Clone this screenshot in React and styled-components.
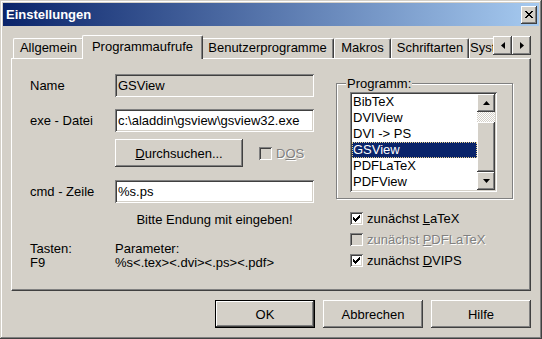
import React from 'react'
import styled, { createGlobalStyle } from 'styled-components'

const FACE = '#d4d0c8'

const raised = `
  box-shadow: inset -1px -1px #404040, inset 1px 1px #fff, inset -2px -2px #808080, inset 2px 2px ${FACE};
`
const sunken = `
  box-shadow: inset 1px 1px #808080, inset -1px -1px #fff, inset 2px 2px #404040, inset -2px -2px ${FACE};
`

const Global = createGlobalStyle`
  html, body { margin: 0; padding: 0; background: ${FACE}; }
  body {
    font-family: "Liberation Sans", Arial, sans-serif;
    font-size: 13px;
    color: #000;
  }
  * { box-sizing: border-box; }
`

const Window = styled.div`
  width: 542px;
  height: 339px;
  padding: 3px;
  background: ${FACE};
  box-shadow: inset -1px -1px #404040, inset 1px 1px ${FACE}, inset -2px -2px #808080, inset 2px 2px #fff;
  display: flex;
  flex-direction: column;
`

const TitleBar = styled.div`
  height: 23px;
  display: flex;
  align-items: center;
  padding: 0 2px 0 3px;
  background: linear-gradient(to right, #0a246a, #a6caf0);
`

const Title = styled.div`
  color: #fff;
  font-weight: bold;
  font-size: 13px;
`

const CaptionButton = styled.div`
  margin-left: auto;
  width: 16px;
  height: 18px;
  background: ${FACE};
  ${raised}
  display: flex;
  align-items: center;
  justify-content: center;
`

const Body = styled.div`
  flex: 1;
  padding: 9px 8px 0 8px;
  display: flex;
  flex-direction: column;
`

const TabRow = styled.div`
  height: 23px;
  display: flex;
  position: relative;
  z-index: 1;
`

const TabStrip = styled.div`
  flex: 1;
  height: 24px;
  overflow: hidden;
  display: flex;
  align-items: flex-end;
  padding-left: 2px;
`

const Tab = styled.div`
  flex-shrink: 0;
  position: relative;
  z-index: ${p => (p.$active ? 2 : 1)};
  width: ${p => p.$w + (p.$active ? 4 : 0)}px;
  height: ${p => (p.$active ? 24 : 20)}px;
  margin: 0 ${p => (p.$active ? -2 : 0)}px ${p => (p.$active ? 0 : 1)}px;
  line-height: ${p => (p.$active ? 21 : 18)}px;
  text-align: center;
  white-space: nowrap;
  background: ${FACE};
  border-top: 1px solid #fff;
  border-left: 1px solid #fff;
  border-right: 1px solid #404040;
  border-radius: 2px 2px 0 0;
  box-shadow: inset -1px 0 #808080;
`

const ScrollPair = styled.div`
  display: flex;
  margin-top: 1px;
`

const ArrowButton = styled.div`
  width: 19px;
  height: 19px;
  background: ${FACE};
  ${raised}
  display: flex;
  align-items: center;
  justify-content: center;
`

const Panel = styled.div`
  height: 233px;
  border: 1px solid;
  border-color: #fff #404040 #404040 #fff;
  box-shadow: inset -1px -1px #808080;
  padding: 15px 0 0 18px;
  display: flex;
`

const LeftCol = styled.div`
  width: 284px;
  display: flex;
  flex-direction: column;
`

const Row = styled.div`
  display: grid;
  grid-template-columns: 85px 199px;
  align-items: center;
  margin-top: ${p => p.$mt || 0}px;
`

const Field = styled.div`
  height: 23px;
  padding: 0 3px;
  line-height: 23px;
  white-space: nowrap;
  overflow: hidden;
  background: ${p => (p.$disabled ? FACE : '#fff')};
  ${sunken}
`

const ButtonLine = styled.div`
  display: flex;
  align-items: center;
`

const PushButton = styled.div`
  width: ${p => p.$w}px;
  height: 28px;
  display: flex;
  align-items: center;
  justify-content: center;
  background: ${FACE};
  ${raised}
  ${p => p.$default && `
    border: 1px solid #000;
    box-shadow: inset -1px -1px #404040, inset 1px 1px #fff, inset -2px -2px #808080;
  `}
`

const Acc = styled.span`
  text-decoration: underline;
  text-underline-offset: 1px;
`

const Hint = styled.div`
  margin-top: 9px;
  margin-left: 85px;
  width: 199px;
  text-align: center;
  line-height: 15px;
`

const Info = styled.div`
  margin-top: 15px;
  display: grid;
  grid-template-columns: 85px 199px;
  line-height: 14px;
`

const RightCol = styled.div`
  margin-left: 22px;
  margin-top: 9px;
  display: flex;
  flex-direction: column;
`

const GroupBox = styled.div`
  position: relative;
  width: 177px;
  height: 116px;
  border: 1px solid #808080;
  box-shadow: 1px 1px 0 #fff, inset 1px 1px 0 #fff;
  padding: 8px 0 0 13px;
`

const Legend = styled.span`
  position: absolute;
  top: -8px;
  left: 9px;
  padding: 0 1px;
  line-height: 15px;
  background: ${FACE};
`

const ListBox = styled.div`
  width: 147px;
  height: 100px;
  padding: 2px;
  background: #fff;
  ${sunken}
  display: flex;
`

const Items = styled.div`
  flex: 1;
`

const Item = styled.div`
  height: 16px;
  line-height: 16px;
  padding-left: 1px;
  white-space: nowrap;
  ${p => p.$selected && `
    background: #0a246a;
    color: #fff;
    outline: 1px dotted #e8d08c;
    outline-offset: -1px;
  `}
`

const ScrollBar = styled.div`
  width: 18px;
  display: flex;
  flex-direction: column;
`

const ScrollButton = styled.div`
  height: ${p => p.$h}px;
  background: ${FACE};
  ${raised}
  display: flex;
  align-items: center;
  justify-content: center;
`

const Track = styled.div`
  height: ${p => p.$h}px;
  background-color: #fff;
  background-image: repeating-conic-gradient(${FACE} 0 25%, #fff 0 50%);
  background-size: 2px 2px;
`

const CheckList = styled.div`
  margin-top: 11px;
  margin-left: 14px;
  display: flex;
  flex-direction: column;
  gap: 5px;
`

const CheckRow = styled.div`
  height: 16px;
  display: flex;
  align-items: center;
  gap: 4px;
  margin-left: ${p => p.$ml || 0}px;
  color: ${p => (p.$disabled ? '#808080' : '#000')};
  text-shadow: ${p => (p.$disabled ? '1px 1px #fff' : 'none')};
`

const Box = styled.div`
  width: 13px;
  height: 13px;
  flex-shrink: 0;
  background: ${p => (p.$disabled ? FACE : '#fff')};
  ${sunken}
  display: flex;
  align-items: center;
  justify-content: center;
`

const ButtonBar = styled.div`
  margin-top: 9px;
  display: flex;
  justify-content: flex-end;
  gap: 8px;
`

const Pixels = ({ w, h, rects }) => (
  <svg width={w} height={h} viewBox={`0 0 ${w} ${h}`} shapeRendering="crispEdges">
    <path d={rects.map(([x, y, rw]) => `M${x} ${y}h${rw}v1h-${rw}z`).join('')} fill="#000" />
  </svg>
)

const closeRects = [
  [0, 0, 2], [6, 0, 2], [1, 1, 2], [5, 1, 2], [2, 2, 4], [3, 3, 2],
  [2, 4, 4], [1, 5, 2], [5, 5, 2], [0, 6, 2], [6, 6, 2],
]
const checkRects = [
  [6, 0, 1], [5, 1, 2], [0, 2, 1], [4, 2, 3], [0, 3, 2], [3, 3, 3],
  [0, 4, 5], [1, 5, 3], [2, 6, 1],
]

const Check = () => <Pixels w={7} h={7} rects={checkRects} />

const Tri = ({ dir }) => {
  const pts = {
    up: '0,4 7,4 3.5,0',
    down: '0,0 7,0 3.5,4',
    left: '4,0 4,7 0,3.5',
    right: '0,0 0,7 4,3.5',
  }[dir]
  const vert = dir === 'up' || dir === 'down'
  return (
    <svg width={vert ? 7 : 4} height={vert ? 4 : 7}>
      <polygon points={pts} fill="#000" />
    </svg>
  )
}

const tabs = [
  { label: 'Allgemein', w: 71 },
  { label: 'Programmaufrufe', w: 117, active: true },
  { label: 'Benutzerprogramme', w: 133 },
  { label: 'Makros', w: 57 },
  { label: 'Schriftarten', w: 78 },
  { label: 'Systemprogramme', w: 110 },
]

const programs = ['BibTeX', 'DVIView', 'DVI -> PS', 'GSView', 'PDFLaTeX', 'PDFView']

export default function App() {
  return (
    <>
      <Global />
      <Window>
        <TitleBar>
          <Title>Einstellungen</Title>
          <CaptionButton>
            <Pixels w={8} h={7} rects={closeRects} />
          </CaptionButton>
        </TitleBar>
        <Body>
          <TabRow>
            <TabStrip>
              {tabs.map(t => (
                <Tab key={t.label} $w={t.w} $active={t.active}>{t.label}</Tab>
              ))}
            </TabStrip>
            <ScrollPair>
              <ArrowButton><Tri dir="left" /></ArrowButton>
              <ArrowButton><Tri dir="right" /></ArrowButton>
            </ScrollPair>
          </TabRow>
          <Panel>
            <LeftCol>
              <Row>
                <span>Name</span>
                <Field $disabled>GSView</Field>
              </Row>
              <Row $mt={12}>
                <span>exe - Datei</span>
                <Field>c:\aladdin\gsview\gsview32.exe</Field>
              </Row>
              <Row $mt={7}>
                <span />
                <ButtonLine>
                  <PushButton $w={128}><span><Acc>D</Acc>urchsuchen...</span></PushButton>
                  <CheckRow $disabled $ml={16}>
                    <Box $disabled />
                    <span>D<Acc>O</Acc>S</span>
                  </CheckRow>
                </ButtonLine>
              </Row>
              <Row $mt={13}>
                <span>cmd - Zeile</span>
                <Field>%s.ps</Field>
              </Row>
              <Hint>Bitte Endung mit eingeben!</Hint>
              <Info>
                <span>Tasten:</span>
                <span>Parameter:</span>
                <span>F9</span>
                <span>%s&lt;.tex&gt;&lt;.dvi&gt;&lt;.ps&gt;&lt;.pdf&gt;</span>
              </Info>
            </LeftCol>
            <RightCol>
              <GroupBox>
                <Legend>Programm:</Legend>
                <ListBox>
                  <Items>
                    {programs.map(p => (
                      <Item key={p} $selected={p === 'GSView'}>{p}</Item>
                    ))}
                  </Items>
                  <ScrollBar>
                    <ScrollButton $h={18}><Tri dir="up" /></ScrollButton>
                    <Track $h={10} />
                    <ScrollButton $h={50} />
                    <ScrollButton $h={18}><Tri dir="down" /></ScrollButton>
                  </ScrollBar>
                </ListBox>
              </GroupBox>
              <CheckList>
                <CheckRow>
                  <Box><Check /></Box>
                  <span>zunächst <Acc>L</Acc>aTeX</span>
                </CheckRow>
                <CheckRow $disabled>
                  <Box $disabled />
                  <span>zunächst <Acc>P</Acc>DFLaTeX</span>
                </CheckRow>
                <CheckRow>
                  <Box><Check /></Box>
                  <span>zunächst <Acc>D</Acc>VIPS</span>
                </CheckRow>
              </CheckList>
            </RightCol>
          </Panel>
          <ButtonBar>
            <PushButton $w={100} $default>OK</PushButton>
            <PushButton $w={100}>Abbrechen</PushButton>
            <PushButton $w={100}>Hilfe</PushButton>
          </ButtonBar>
        </Body>
      </Window>
    </>
  )
}
